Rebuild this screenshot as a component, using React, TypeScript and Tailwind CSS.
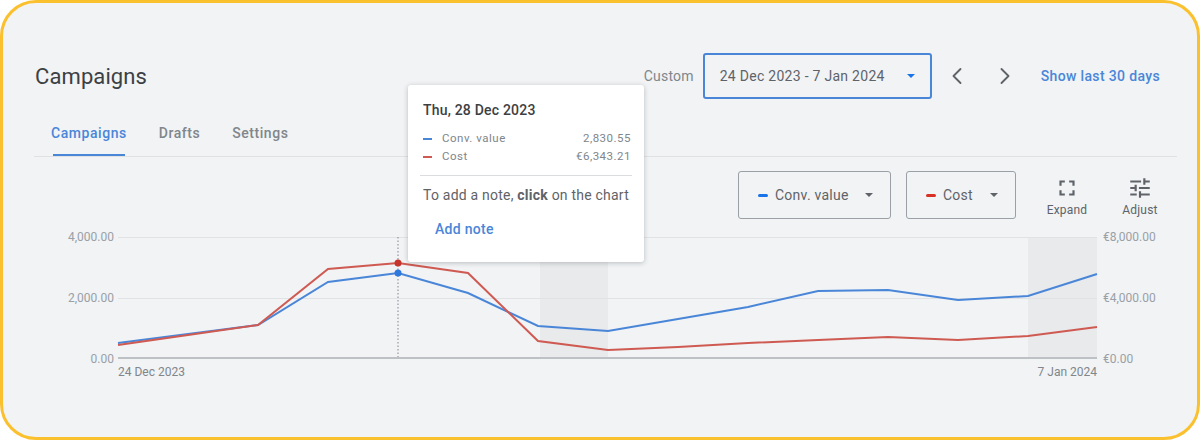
import { ChevronLeft, ChevronRight } from "lucide-react";
import { MdFullscreen, MdTune } from "react-icons/md";

const BLUE_LINE = "0,106 70,97 140,88 210,45 280,36 350,56 420,89 490,94 560,82 630,70 700,54 770,53 840,63 910,59 979,37";
const RED_LINE = "0,108 70,98 140,88 210,32 280,26 350,36 420,104 490,113 560,110 630,106 700,103 770,100 840,103 910,99 979,90";

const Caret = ({ className }: { className: string }) => (
  <svg width="8" height="4" viewBox="0 0 8 4" className={className}>
    <polygon points="0,0 8,0 4,4" fill="currentColor" />
  </svg>
);

const SeriesButton = ({ label, color, width }: { label: string; color: string; width: string }) => (
  <div className={`flex h-[48px] items-center rounded-[3px] border border-[#9aa0a6] pl-[19px] ${width}`}>
    <span className={`h-[3px] w-[10px] rounded-sm ${color}`} />
    <span className="ml-[7px] text-[14px] tracking-[0.25px] text-[#5f6368]">{label}</span>
    <Caret className="ml-auto mr-[17px] text-[#5f6368]" />
  </div>
);

const ToolButton = ({ label, children }: { label: string; children: React.ReactNode }) => (
  <div className="flex w-[60px] flex-col items-center pt-[2px] text-[#5f6368]">
    {children}
    <span className="mt-[2px] text-[12px] leading-[14px] tracking-[0.2px]">{label}</span>
  </div>
);

const TooltipRow = ({ label, value, color }: { label: string; value: string; color: string }) => (
  <div className="flex h-[18px] items-center text-[11.5px] tracking-[0.5px] text-[#80868b]">
    <span className={`h-[2px] w-[9px] ${color}`} />
    <span className="ml-[10px]">{label}</span>
    <span className="-mr-[2px] ml-auto">{value}</span>
  </div>
);

const App = () => {
  return (
    <div className="h-[440px] w-[1200px] bg-white font-['Roboto',sans-serif]">
      <div className="relative box-border h-[440px] w-[1200px] rounded-[36px] border-[3px] border-[#fbc02d] bg-[#f1f3f5] pl-[31px] pr-[20px] pt-[50px]">
        {/* HEADER */}
        <div className="flex h-[46px] items-center pr-[17px]">
          <h1 className="pl-[1px] text-[22px] tracking-[0.1px] text-[#3c4043]">Campaigns</h1>
          <span className="ml-auto text-[14px] tracking-[0.2px] text-[#80868b]">Custom</span>
          <div className="ml-[9px] flex h-[46px] w-[229px] items-center rounded-[3px] border-2 border-[#4a86d8] pl-[15px] pr-[15px]">
            <span className="text-[14px] tracking-[0.28px] text-[#5f6368]">24 Dec 2023 - 7 Jan 2024</span>
            <Caret className="ml-auto text-[#1a73e8]" />
          </div>
          <ChevronLeft size={28} strokeWidth={1.6} className="ml-[11px] text-[#5f6368]" />
          <ChevronRight size={28} strokeWidth={1.6} className="ml-[20px] text-[#5f6368]" />
          <span className="ml-[22px] text-[14px] font-medium tracking-[0.35px] text-[#4a86d8]">Show last 30 days</span>
        </div>

        {/* TABS */}
        <div className="mt-[18px] flex h-[40px] gap-[32px] border-b border-[#dfe1e5] pl-[17px] text-[14px] font-medium tracking-[0.55px] text-[#80868b]">
          <div className="relative pt-[6px] text-[#4a86d8]">
            Campaigns
            <span className="absolute bottom-0 left-[2px] right-[2px] h-[2px] bg-[#4a86d8]" />
          </div>
          <div className="pt-[6px]">Drafts</div>
          <div className="pt-[6px]">Settings</div>
        </div>

        {/* CHART CONTROLS */}
        <div className="mt-[14px] flex h-[48px] items-center">
          <div className="ml-[704px]">
            <SeriesButton label="Conv. value" color="bg-[#1a73e8]" width="w-[153px]" />
          </div>
          <div className="ml-[15px]">
            <SeriesButton label="Cost" color="bg-[#d93025]" width="w-[110px]" />
          </div>
          <div className="ml-[21px] flex gap-[13px]">
            <ToolButton label="Expand">
              <MdFullscreen size={26} />
            </ToolButton>
            <ToolButton label="Adjust">
              <MdTune size={26} />
            </ToolButton>
          </div>
        </div>

        {/* CHART */}
        <div className="mt-[11px] flex text-[12px] leading-[14px] text-[#9aa0a6]">
          <div className="flex h-[136px] w-[80px] flex-col items-end justify-between">
            <span>4,000.00</span>
            <span>2,000.00</span>
            <span>0.00</span>
          </div>
          <div className="ml-[4px] w-[979px] pt-[7px]">
            <svg width="979" height="122" viewBox="0 0 979 122" className="block overflow-visible">
              <rect x="422" y="0" width="68" height="121" fill="#e8eaec" />
              <rect x="910" y="0" width="69" height="121" fill="#e8eaec" />
              <line x1="0" y1="0.5" x2="979" y2="0.5" stroke="#e0e2e5" />
              <line x1="0" y1="61.5" x2="979" y2="61.5" stroke="#e0e2e5" />
              <line x1="0" y1="121" x2="979" y2="121" stroke="#bdc1c6" strokeWidth="2" />
              <line x1="280" y1="0" x2="280" y2="120" stroke="#80868b" strokeDasharray="1.5 2" />
              <polyline points={BLUE_LINE} fill="none" stroke="#4a86d8" strokeWidth="2" />
              <polyline points={RED_LINE} fill="none" stroke="#cf5a52" strokeWidth="2" />
              <circle cx="280" cy="36" r="3.5" fill="#2f78dc" />
              <circle cx="280" cy="26" r="3.5" fill="#c5352c" />
            </svg>
            <div className="mt-[6px] flex justify-between text-[#80868b]">
              <span>24 Dec 2023</span>
              <span>7 Jan 2024</span>
            </div>
          </div>
          <div className="ml-[6px] flex h-[136px] flex-col justify-between">
            <span>€8,000.00</span>
            <span>€4,000.00</span>
            <span>€0.00</span>
          </div>
        </div>

        {/* TOOLTIP */}
        <div className="absolute left-[405px] top-[82px] box-border h-[177px] w-[236px] rounded-[3px] bg-white px-[15px] pt-[15px] shadow-[0_1px_5px_rgba(60,64,67,0.3)]">
          <div className="text-[14px] font-medium leading-[20px] tracking-[0.2px] text-[#3c4043]">Thu, 28 Dec 2023</div>
          <div className="mt-[10px]">
            <TooltipRow label="Conv. value" value="2,830.55" color="bg-[#4a86d8]" />
            <TooltipRow label="Cost" value="€6,343.21" color="bg-[#cf5a52]" />
          </div>
          <div className="-mx-[3px] mt-[9px] whitespace-nowrap border-t border-[#dadce0] px-[3px] pt-[10px] text-[14px] leading-[18px] tracking-[0.22px] text-[#5f6368]">
            To add a note, <b className="font-bold">click</b> on the chart
          </div>
          <div className="ml-[12px] mt-[16px] text-[14px] font-medium leading-[18px] tracking-[0.3px] text-[#4a86d8]">Add note</div>
        </div>
      </div>
    </div>
  );
};

export default App;
